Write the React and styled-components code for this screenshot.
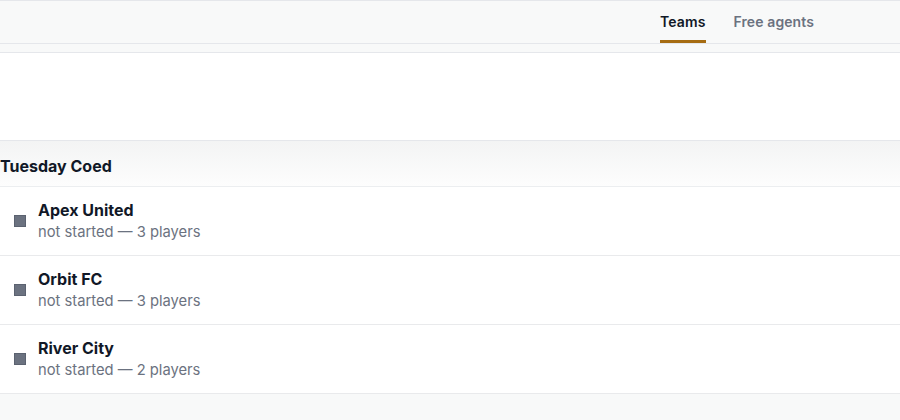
import React from "react";
import styled, { createGlobalStyle } from "styled-components";

const Global = createGlobalStyle`
  html, body { margin: 0; padding: 0; background: #f8f9f9; }
  body { font-family: Inter, "Noto Sans", sans-serif; color: #111827; }
  * { box-sizing: border-box; }
`;

const Page = styled.div`
  display: flex;
  flex-direction: column;
  min-height: 420px;
  background: #f8f9f9;
`;

const TopBar = styled.nav`
  height: 44px;
  border-top: 1px solid #e5e7eb;
  border-bottom: 1px solid #e5e7eb;
  background: #f8f9f9;
  display: flex;
  justify-content: flex-end;
  align-items: stretch;
  padding-right: 86px;
  gap: 28px;
`;

const Tab = styled.button`
  all: unset;
  cursor: pointer;
  display: flex;
  align-items: center;
  padding-top: 1px;
  font-size: 14px;
  font-weight: 600;
  letter-spacing: 0.1px;
  color: ${(p) => (p.$active ? "#111827" : "#6b7280")};
  border-bottom: 3px solid ${(p) => (p.$active ? "#a66c12" : "transparent")};
`;

const Spacer = styled.div`
  height: 8px;
`;

const Hero = styled.section`
  height: 89px;
  background: #ffffff;
  border-top: 1px solid #e5e7eb;
  border-bottom: 1px solid #e5e7eb;
`;

const GroupHeader = styled.h2`
  margin: 0;
  height: 46px;
  padding-top: 4px;
  display: flex;
  align-items: center;
  font-size: 16px;
  font-weight: 700;
  color: #111827;
  background: linear-gradient(#f3f4f4, #fdfdfd);
  border-bottom: 1px solid #eceef0;
`;

const List = styled.ul`
  list-style: none;
  margin: 0;
  padding: 0;
  background: #ffffff;
`;

const Row = styled.li`
  height: 69px;
  display: flex;
  align-items: center;
  gap: 12px;
  padding-left: 14px;
  border-bottom: 1px solid #e9eaec;
`;

const Swatch = styled.span`
  width: 12px;
  height: 12px;
  background: #6b7280;
  border: 1px solid #5b6270;
  flex: none;
`;

const Info = styled.div`
  display: flex;
  flex-direction: column;
  gap: 2px;
`;

const Name = styled.div`
  font-size: 16px;
  font-weight: 700;
  color: #111827;
  line-height: 20px;
`;

const Meta = styled.div`
  font-size: 14.75px;
  color: #6b7280;
  line-height: 20px;
`;

const teams = [
  { name: "Apex United", players: 3 },
  { name: "Orbit FC", players: 3 },
  { name: "River City", players: 2 },
];

export default function App() {
  return (
    <Page>
      <Global />
      <TopBar>
        <Tab $active>Teams</Tab>
        <Tab>Free agents</Tab>
      </TopBar>
      <Spacer />
      <Hero />
      <GroupHeader>Tuesday Coed</GroupHeader>
      <List>
        {teams.map((t) => (
          <Row key={t.name}>
            <Swatch />
            <Info>
              <Name>{t.name}</Name>
              <Meta>not started — {t.players} players</Meta>
            </Info>
          </Row>
        ))}
      </List>
    </Page>
  );
}
